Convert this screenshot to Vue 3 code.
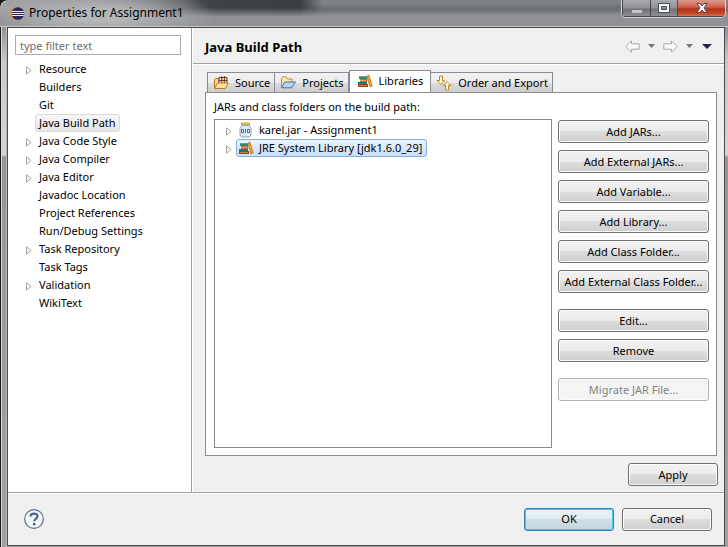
<script setup>
import { ref } from 'vue'

const filter = ref('')
const selectedPage = ref('Java Build Path')
const activeTab = ref('Libraries')
const selectedEntry = ref('jre')

const pages = [
  { name: 'Resource', parent: true },
  { name: 'Builders' },
  { name: 'Git' },
  { name: 'Java Build Path' },
  { name: 'Java Code Style', parent: true },
  { name: 'Java Compiler', parent: true },
  { name: 'Java Editor', parent: true },
  { name: 'Javadoc Location' },
  { name: 'Project References' },
  { name: 'Run/Debug Settings' },
  { name: 'Task Repository', parent: true },
  { name: 'Task Tags' },
  { name: 'Validation', parent: true },
  { name: 'WikiText' },
]

const tabs = ['Source', 'Projects', 'Libraries', 'Order and Export']

const entries = [
  { id: 'karel', label: 'karel.jar - Assignment1' },
  { id: 'jre', label: 'JRE System Library [jdk1.6.0_29]' },
]

const actionGroups = [
  ['Add JARs...', 'Add External JARs...', 'Add Variable...', 'Add Library...', 'Add Class Folder...', 'Add External Class Folder...'],
  ['Edit...', 'Remove'],
  ['Migrate JAR File...'],
]
</script>

<template>
  <div class="window">
    <header class="titlebar">
      <svg class="logo" viewBox="0 0 16 16" width="16" height="16" aria-hidden="true">
        <circle cx="6.4" cy="8.500" r="6.3" fill="#f08a1c" />
        <circle cx="7.900" cy="8.500" r="6.3" fill="#2f2657" />
        <path d="M2 6.500h11.800M1.600 8.500h12.600M2 10.500h11.800" stroke="#e9e8f5" />
      </svg>
      <h1 class="title">Properties for Assignment1</h1>
      <div class="controls">
        <button class="ctl min" disabled aria-label="Minimize">
          <svg viewBox="0 0 12 12" width="12" height="12"><path d="M1 8h10v3H1z" fill="#c4c6c8" /></svg>
        </button>
        <button class="ctl max" aria-label="Maximize">
          <svg viewBox="0 0 12 12" width="12" height="12">
            <path fill-rule="evenodd" d="M.5 1.500h11v9H.5zM3.500 4.500v3h5v-3z" fill="#f6f6f6" stroke="#4a4d5c" />
          </svg>
        </button>
        <button class="ctl close" aria-label="Close">
          <svg viewBox="0 0 12 12" width="12" height="12">
            <path d="M1 1.500h3l2 2.500 2-2.500h3l-3 4.300 3 4.700h-3L6 8l-2 2.500H1l3-4.700z" fill="#fff" stroke="#55455a" />
          </svg>
        </button>
      </div>
    </header>

    <main class="client">
      <div class="body">
        <nav class="sidebar" aria-label="Property pages">
          <input v-model="filter" class="filter" type="text" placeholder="type filter text" aria-label="Filter" />
          <ul class="tree">
            <li v-for="page in pages" :key="page.name" class="row">
              <span class="twist">
                <svg v-if="page.parent" viewBox="0 0 6 9" width="6" height="9"><path d="M.5.8v7.400L5 4.500z" fill="#fff" stroke="#a3a3a3" /></svg>
              </span>
              <button class="item" :class="{ chosen: page.name === selectedPage }" @click="selectedPage = page.name">{{ page.name }}</button>
            </li>
          </ul>
        </nav>

        <section class="page">
          <div class="pagehead">
            <h2 class="heading">Java Build Path</h2>
            <div class="history">
              <button class="nav" disabled aria-label="Back">
                <svg viewBox="0 0 15 13" width="15" height="13"><path d="M.8 6.500 6.500.8v3h7.700v5.400H6.500v3z" fill="#fafafa" stroke="#a9a9a9" stroke-linejoin="round" /></svg>
              </button>
              <button class="nav" disabled aria-label="Back history">
                <svg viewBox="0 0 7 4" width="7" height="4"><path d="M0 0h7L3.500 4z" fill="#77777b" /></svg>
              </button>
              <button class="nav" disabled aria-label="Forward">
                <svg viewBox="0 0 15 13" width="15" height="13"><path d="M14.200 6.500 8.500.8v3H.8v5.400h7.700v3z" fill="#fafafa" stroke="#a9a9a9" stroke-linejoin="round" /></svg>
              </button>
              <button class="nav" disabled aria-label="Forward history">
                <svg viewBox="0 0 7 4" width="7" height="4"><path d="M0 0h7L3.500 4z" fill="#77777b" /></svg>
              </button>
              <button class="nav menu" aria-label="Menu">
                <svg viewBox="0 0 10 5" width="10" height="5"><path d="M0 0h10L5 5z" fill="#2c1c55" /></svg>
              </button>
            </div>
          </div>

          <div class="content">
            <div class="tabs" role="tablist">
              <button
                v-for="tab in tabs"
                :key="tab"
                class="tab"
                :class="{ active: tab === activeTab }"
                role="tab"
                :aria-selected="tab === activeTab"
                @click="activeTab = tab"
              >
                <svg v-if="tab === 'Source'" viewBox="0 0 16 16" width="16" height="16" aria-hidden="true">
                  <path d="M1.500 13V4.500l1-1h3l1 1.500h6v8z" fill="#f6d58d" stroke="#b3741f" />
                  <path d="M6 2.500h8v6H6z" fill="#f3dcc0" stroke="#6b3c24" />
                  <path d="M8.700 1v7M11.400 1v7M5.500 5.500H14" stroke="#6b3c24" />
                  <path d="M1.500 13.500 4.500 8h10.700l-2.700 5.500z" fill="#fbe2a3" stroke="#bd7b24" stroke-linejoin="round" />
                </svg>
                <svg v-else-if="tab === 'Projects'" viewBox="0 0 16 16" width="16" height="16" aria-hidden="true">
                  <path d="M1.500 12.500v-9l1.300-1.700h3.400L7.500 4H12v3" fill="#fbe6a9" stroke="#c58f35" stroke-linejoin="round" />
                  <path d="M1.500 12.800 4.800 7h10.700l-4 5.800z" fill="#b9d8f7" stroke="#3b70bb" stroke-linejoin="round" />
                </svg>
                <svg v-else-if="tab === 'Libraries'" viewBox="0 0 16 16" width="16" height="16" aria-hidden="true">
                  <path d="M2 3h8v3H2z" fill="#2f8a72" /><path d="M2 3h8v1H2z" fill="#54a98d" />
                  <path d="M3 6h7v3H3z" fill="#d6622b" /><path d="M3 7h6v1H3z" fill="#f3a268" />
                  <path d="M1 9h9v2H1z" fill="#2b7280" />
                  <path d="M1 11h10v3H1z" fill="#8b4a1c" /><path d="M2 12h8v1H2z" fill="#c48345" />
                  <path d="m9.800 3 2.200-.8 3.300 10.600-2.500 1z" fill="#eaa42e" stroke="#b96f18" stroke-width=".7" />
                </svg>
                <svg v-else viewBox="0 0 16 16" width="16" height="16" aria-hidden="true">
                  <path d="M3.500 1h3v4.500h2L5 9.500 1 5.500h2.500z" fill="#fff7d8" stroke="#bd8a22" stroke-linejoin="round" />
                  <path d="M9.500 15h3v-4.500H15l-4-4-3.500 4h2z" fill="#fff7d8" stroke="#bd8a22" stroke-linejoin="round" />
                </svg>
                <span>{{ tab }}</span>
              </button>
            </div>

            <div class="pane" role="tabpanel">
              <p class="caption">JARs and class folders on the build path:</p>
              <div class="split">
                <ul class="list">
                  <li v-for="entry in entries" :key="entry.id" class="row">
                    <span class="twist">
                      <svg viewBox="0 0 6 9" width="6" height="9"><path d="M.5.8v7.400L5 4.500z" fill="#fff" stroke="#a3a3a3" /></svg>
                    </span>
                    <button class="entry" :class="{ picked: entry.id === selectedEntry }" @click="selectedEntry = entry.id">
                      <svg v-if="entry.id === 'karel'" viewBox="0 0 16 16" width="16" height="16" aria-hidden="true">
                        <path d="M3.500 1h8v2h-8z" fill="#f6dc7d" stroke="#c39a2b" />
                        <path d="M4 3.500h7l2 3V13l-1.500 2h-8L2 13V6.500z" fill="#dcebf8" stroke="#86a2c0" />
                        <path d="M3.500 7.500h2v3h-2zM7.500 7v4M9.500 7.500h2v3h-2z" fill="none" stroke="#4a5c78" stroke-width=".9" />
                      </svg>
                      <svg v-else viewBox="0 0 16 16" width="16" height="16" aria-hidden="true">
                        <path d="M2 3h8v3H2z" fill="#2f8a72" /><path d="M2 3h8v1H2z" fill="#54a98d" />
                        <path d="M3 6h7v3H3z" fill="#d6622b" /><path d="M3 7h6v1H3z" fill="#f3a268" />
                        <path d="M1 9h9v2H1z" fill="#2b7280" />
                        <path d="M1 11h10v3H1z" fill="#8b4a1c" /><path d="M2 12h8v1H2z" fill="#c48345" />
                        <path d="m9.800 3 2.200-.8 3.300 10.600-2.500 1z" fill="#eaa42e" stroke="#b96f18" stroke-width=".7" />
                      </svg>
                      <span>{{ entry.label }}</span>
                    </button>
                  </li>
                </ul>
                <div class="actions">
                  <div v-for="(group, i) in actionGroups" :key="i" class="group">
                    <button v-for="label in group" :key="label" class="btn" :disabled="label.startsWith('Migrate')">{{ label }}</button>
                  </div>
                </div>
              </div>
            </div>

            <div class="applybar">
              <button class="btn short">Apply</button>
            </div>
          </div>
        </section>
      </div>

      <footer class="footer">
        <button class="help" aria-label="Help">
          <svg viewBox="0 0 20 20" width="20" height="20">
            <circle cx="10" cy="10" r="9.300" fill="#f4f6f9" stroke="#5b7090" stroke-width="1.200" />
            <path d="M6.500 7.600C6.500 3.600 13.500 3.700 13.500 7.300c0 2.500-3.300 2.500-3.300 5" fill="none" stroke="#4c6690" stroke-width="2.200" />
            <circle cx="10.200" cy="15.200" r="1.400" fill="#4c6690" />
          </svg>
        </button>
        <button class="btn short primary">OK</button>
        <button class="btn short">Cancel</button>
      </footer>
    </main>
  </div>
</template>

<style>
body {
  margin: 0;
}
</style>

<style scoped>
* {
  box-sizing: border-box;
}
.window {
  min-height: 100vh;
  display: flex;
  flex-direction: column;
  padding: 0 3px 1px 7px;
  font-family: "Noto Sans", "Open Sans", sans-serif;
  font-size: 11px;
  line-height: 18px;
  color: #000;
  background:
    linear-gradient(90deg, #1b1b1b 1px, #d8d8d8 1px, #d8d8d8 2px, transparent 2px, transparent 6px, #bdbdbd 6px, #bdbdbd 7px, transparent 7px),
    linear-gradient(#8e9094 27px, #c9c9c9 60px, #d5d3d3 155px, #9a9696 157px, #a3a0a0);
}
button {
  font: inherit;
  color: inherit;
  border: 0;
  padding: 0;
  margin: 0;
  background: none;
}
svg {
  display: block;
  flex: none;
}
ul {
  list-style: none;
  margin: 0;
  padding: 0;
}

.titlebar {
  height: 27px;
  display: flex;
  align-items: center;
  margin: 0 -3px 0 -7px;
  padding: 0 2px 0 10px;
  border-bottom: 1px solid #c5c7c9;
  background:
    radial-gradient(circle 7px at 7px 7px, transparent 5px, #d0d0d0 6px, #1b1b1b 7px) 0 0 / 6px 6px no-repeat,
    radial-gradient(ellipse 120px 26px at 98px 15px, #b4b5b7 25%, #b4b5b700),
    linear-gradient(transparent 8px, #8f9195 17px),
    linear-gradient(90deg, #a0a1a3 0, #85878a 100px, #5c6063 180px, #3f4345 210px, #3b3f41 300px, #3b3f4100 322px),
    linear-gradient(#808286 0, #7e8084 4px, #5f6467 11px, #8f9195 17px, #96989c);
}
.title {
  margin: 0 auto 0 3px;
  font-size: 12px;
  font-weight: 400;
}
.controls {
  align-self: flex-start;
  display: flex;
  height: 18px;
  border: 1px solid #d5d5d8;
  border-top: 0;
  border-radius: 0 0 5px 5px;
  overflow: hidden;
}
.ctl {
  display: flex;
  align-items: center;
  justify-content: center;
  width: 27px;
  border: 1px solid #45474a;
  border-width: 0 0 1px 1px;
  background: linear-gradient(#a9abae 0, #8f9194 8px, #6f7175 9px, #8d8f93);
}
.min {
  width: 28px;
}
.close {
  width: 48px;
  background: linear-gradient(#dc9a8a 0, #cb6450 7px, #b32f17 9px, #c8502c 14px, #d8754e);
}

.client {
  flex: 1;
  display: flex;
  flex-direction: column;
  border: 1px solid #47484a;
  background: #f0f0f0;
}
.body {
  flex: 1;
  display: flex;
}
.sidebar {
  flex: none;
  width: 184px;
  padding: 7px 10px 0 7px;
  border-right: 1px solid #a0a0a0;
  background: #fff;
}
.filter {
  display: block;
  width: 100%;
  height: 20px;
  padding: 0 4px;
  border: 1px solid #abadb3;
  font: inherit;
}
.filter::placeholder {
  color: #6d6d6d;
  opacity: 1;
}
.tree {
  padding: 5px 0 0 8px;
}
.row {
  display: flex;
  align-items: center;
  height: 18px;
}
.twist {
  width: 12px;
  padding: 2px 0 0 3px;
}
.item {
  height: 18px;
  line-height: 16px;
  padding: 0 3px;
  border: 1px solid transparent;
  border-radius: 3px;
}
.chosen {
  border-color: #d9d9d9;
  background: linear-gradient(#f8f8f8, #e5e5e5);
}

.page {
  flex: 1;
  min-width: 0;
  display: flex;
  flex-direction: column;
  border-left: 1px solid #fff;
}
.pagehead {
  display: flex;
  align-items: center;
  justify-content: space-between;
  height: 36px;
  padding: 0 12px;
  border-bottom: 1px solid #a0a0a0;
}
.heading {
  margin: 0;
  padding-top: 2px;
  font-size: 13px;
  font-weight: 700;
}
.history {
  display: flex;
  align-items: center;
  gap: 8px;
  padding-top: 1px;
}
.menu {
  margin-left: 1px;
}
.content {
  flex: 1;
  display: flex;
  flex-direction: column;
  padding: 5px 7px 6px 12px;
  border-top: 1px solid #fff;
}
.tabs {
  display: flex;
  align-items: flex-end;
  padding-left: 2px;
}
.tab {
  display: flex;
  align-items: center;
  gap: 6px;
  height: 20px;
  padding: 0 4px 0 5px;
  border: 1px solid #898c95;
  border-bottom: 0;
  background: linear-gradient(#f2f2f2, #ebebeb 50%, #dddddd 50%, #cdcdcd);
}
.tab + .tab {
  border-left: 0;
}
.tab.active {
  height: 23px;
  padding: 0 7px 2px;
  margin-bottom: -1px;
  border-left: 1px solid #898c95;
  background: #fff;
}
.pane {
  flex: 1;
  display: flex;
  flex-direction: column;
  padding: 5px 7px 7px 8px;
  border: 1px solid #898c95;
  background: #fff;
}
.caption {
  margin: 0 0 3px;
}
.split {
  flex: 1;
  display: flex;
  gap: 6px;
}
.list {
  flex: 1;
  min-width: 0;
  padding: 1px 0 0 8px;
  border: 1px solid #828790;
}
.entry {
  display: flex;
  align-items: center;
  gap: 5px;
  height: 18px;
  line-height: 16px;
  margin-left: 1px;
  padding: 0 4px 0 1px;
  border: 1px solid transparent;
  border-radius: 3px;
}
.picked {
  border-color: #84acdd;
  background: linear-gradient(#ebf3fd, #c6dffb);
}
.actions {
  flex: none;
  width: 151px;
  display: flex;
  flex-direction: column;
  gap: 16px;
  padding-top: 1px;
}
.group {
  display: flex;
  flex-direction: column;
  gap: 7px;
}
.btn {
  height: 23px;
  border: 1px solid #707070;
  border-radius: 3px;
  white-space: nowrap;
  background: linear-gradient(#f2f2f2, #ebebeb 50%, #dddddd 50%, #cfcfcf);
  box-shadow: inset 0 0 0 1px #fbfbfb;
}
.btn:disabled {
  color: #838383;
  border-color: #adb2b5;
  background: #f4f4f4;
}
.short {
  width: 90px;
}
.primary {
  border-color: #3c7fb1;
  background: linear-gradient(#eaf3f7, #e0ecf1 50%, #cfdde4 50%, #c6d5dc);
  box-shadow: inset 0 0 0 1px #48c8ee;
}
.applybar {
  display: flex;
  justify-content: flex-end;
  padding-top: 7px;
}
.applybar .btn {
  margin-right: -1px;
}
.footer {
  display: flex;
  align-items: center;
  gap: 8px;
  height: 53px;
  padding: 0 12px 0 16px;
  border-top: 1px solid #a0a0a0;
  box-shadow: inset 0 1px #fff;
}
.help {
  margin-right: auto;
}
</style>
